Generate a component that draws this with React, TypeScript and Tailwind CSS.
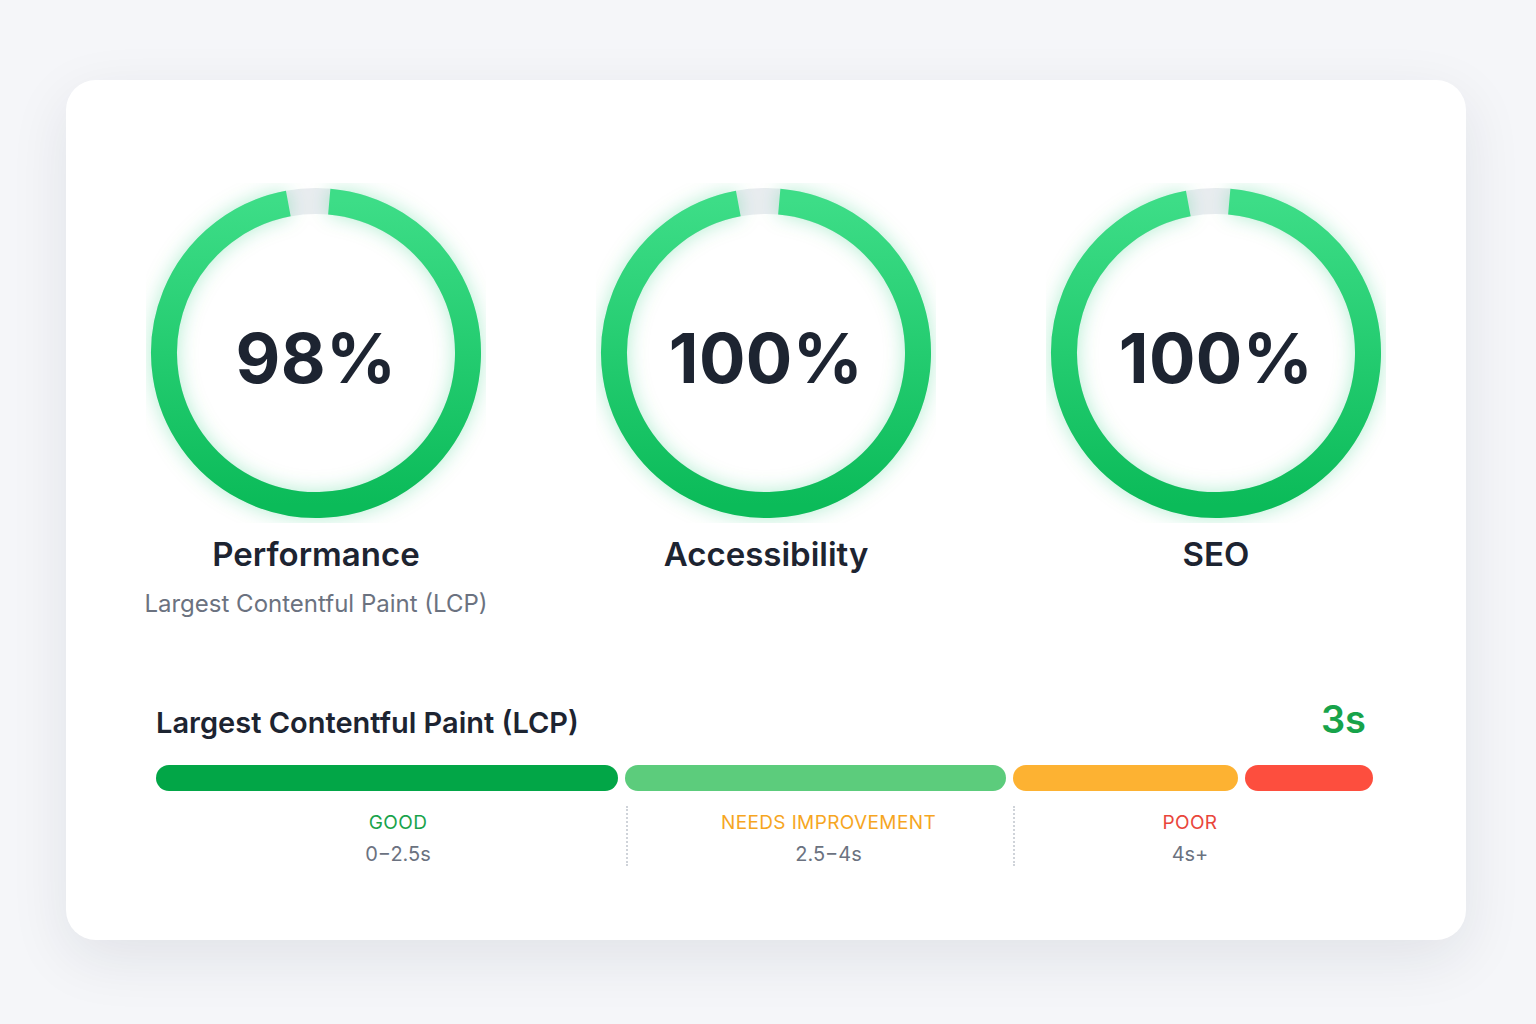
import React from "react";

const scores = [
  { value: "98%", label: "Performance", sub: "Largest Contentful Paint (LCP)" },
  { value: "100%", label: "Accessibility", sub: "" },
  { value: "100%", label: "SEO", sub: "" },
];

const R = 152;
const CX = 170;

function pt(deg: number) {
  const a = (deg * Math.PI) / 180;
  return `${(CX + R * Math.sin(a)).toFixed(2)} ${(CX - R * Math.cos(a)).toFixed(2)}`;
}

function Ring({ id, value }: { id: string; value: string }) {
  // arc starts a little right of top and runs clockwise, leaving a small gap
  const d = `M ${pt(5)} A ${R} ${R} 0 1 1 ${pt(349.5)}`;
  return (
    <div className="relative w-[340px] h-[340px]">
      <svg width="340" height="340" viewBox="0 0 340 340" className="absolute inset-0">
        <defs>
          <linearGradient id={`g-${id}`} gradientUnits="userSpaceOnUse" x1="170" y1="18" x2="170" y2="322">
            <stop offset="0%" stopColor="#3ddd87" />
            <stop offset="100%" stopColor="#0bbb59" />
          </linearGradient>
          <filter id={`f-${id}`} x="-20%" y="-20%" width="140%" height="140%">
            <feGaussianBlur stdDeviation="10" />
          </filter>
        </defs>
        <circle cx={CX} cy={CX} r={R} fill="none" stroke="#e9ecf0" strokeWidth="26" />
        <path d={d} fill="none" stroke="#22c566" strokeOpacity="0.3" strokeWidth="26" filter={`url(#f-${id})`} />
        <path d={d} fill="none" stroke={`url(#g-${id})`} strokeWidth="26" />
      </svg>
      <div className="absolute inset-0 flex items-center justify-center pt-[10px]">
        <span className="text-[69px] leading-none font-bold tracking-[0.005em] text-[#1d2431]">{value}</span>
      </div>
    </div>
  );
}

const segments = [
  { w: "w-[462px]", c: "bg-[#02a647]" },
  { w: "w-[381px]", c: "bg-[#5ccc7c]" },
  { w: "w-[225px]", c: "bg-[#fdb232]" },
  { w: "w-[128px]", c: "bg-[#fd4e3e]" },
];

export default function App() {
  return (
    <div
      className="min-h-screen w-full bg-[#f5f6f9] pt-[80px] pl-[66px]"
      style={{ fontFamily: "Inter, 'Noto Sans', 'Liberation Sans', sans-serif" }}
    >
      <div className="w-[1400px] h-[860px] rounded-[30px] bg-white shadow-[0_18px_60px_rgba(20,30,60,0.09)] pt-[103px]">
        {/* score rings */}
        <div className="flex justify-center">
          {scores.map((s, i) => (
            <div key={s.label} className="w-[450px] flex flex-col items-center">
              <Ring id={`r${i}`} value={s.value} />
              <div className="mt-[11px] text-[33px] leading-[40px] font-semibold text-[#1d2431]">{s.label}</div>
              {s.sub && <div className="mt-[15px] text-[24px] leading-[30px] text-[#6b7280]">{s.sub}</div>}
            </div>
          ))}
        </div>

        {/* LCP bar */}
        <div className="pl-[90px] pr-[93px] mt-[78px]">
          <div className="flex items-end justify-between">
            <div className="text-[29px] leading-[36px] font-semibold text-[#1d2431]">Largest Contentful Paint (LCP)</div>
            <div className="text-[38px] leading-[44px] font-semibold text-[#17a34a] pr-[7px]">3s</div>
          </div>
          <div className="mt-[24px] flex gap-[7px]">
            {segments.map((s) => (
              <div key={s.c} className={`${s.w} ${s.c} h-[26px] rounded-full`} />
            ))}
          </div>
          <div className="mt-[15px] flex">
            <div className="w-[470px] pl-[14px] pt-[5px] flex flex-col items-center">
              <div className="text-[19px] leading-[24px] tracking-[0.02em] text-[#19a34b]">GOOD</div>
              <div className="mt-[7px] text-[20px] leading-[24px] text-[#6b7280]">0−2.5s</div>
            </div>
            <div className="w-[387px] pl-[16px] pt-[5px] border-l-2 border-dotted border-[#cfd3d9] flex flex-col items-center">
              <div className="text-[19px] leading-[24px] tracking-[0.02em] text-[#f6a61f]">NEEDS IMPROVEMENT</div>
              <div className="mt-[7px] text-[20px] leading-[24px] text-[#6b7280]">2.5−4s</div>
            </div>
            <div className="w-[360px] pr-[8px] pt-[5px] border-l-2 border-dotted border-[#cfd3d9] flex flex-col items-center">
              <div className="text-[19px] leading-[24px] tracking-[0.02em] text-[#e9463b]">POOR</div>
              <div className="mt-[7px] text-[20px] leading-[24px] text-[#6b7280]">4s+</div>
            </div>
          </div>
        </div>
      </div>
    </div>
  );
}
